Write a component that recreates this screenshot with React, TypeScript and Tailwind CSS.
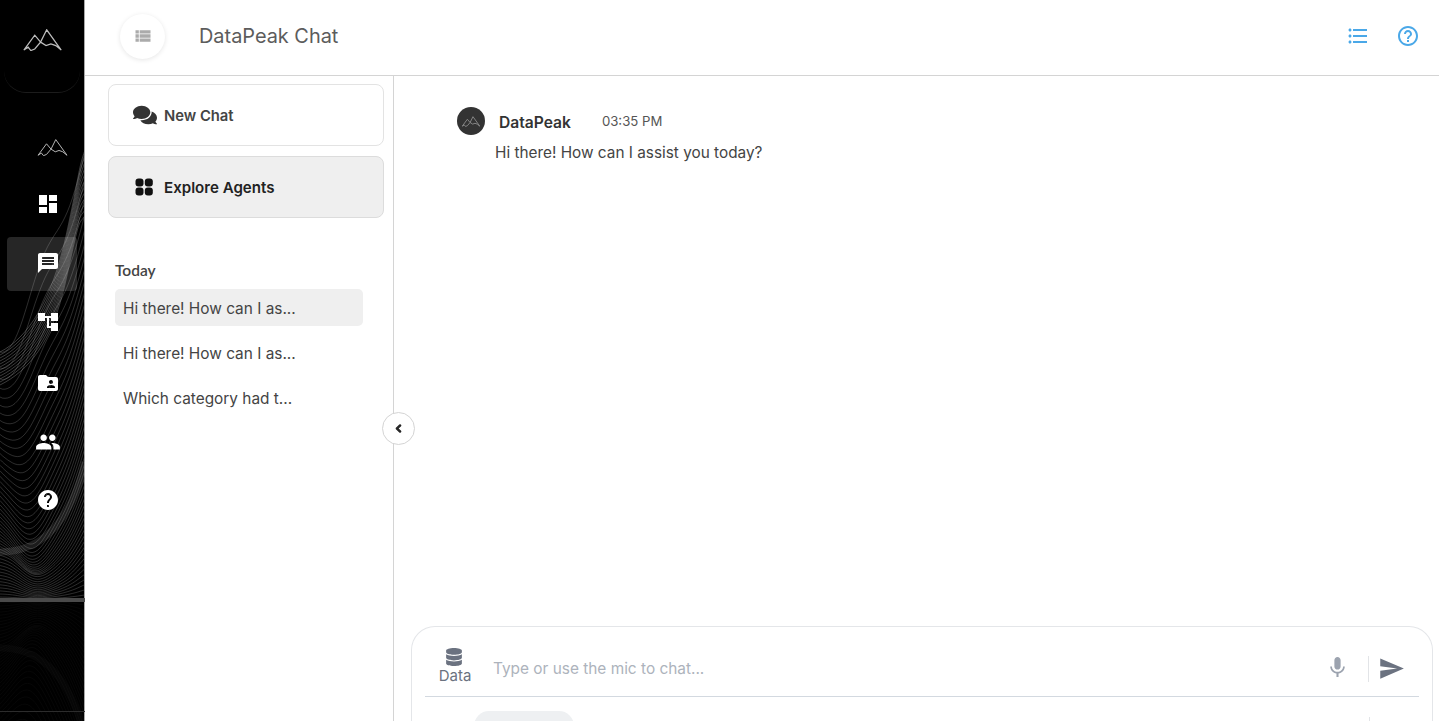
import { FaComments, FaDatabase, FaChevronLeft } from 'react-icons/fa';
import {
  MdDashboard,
  MdMessage,
  MdAccountTree,
  MdFolderShared,
  MdPeople,
  MdHelp,
  MdFormatListBulleted,
  MdHelpOutline,
  MdMic,
  MdSend,
  MdViewList,
} from 'react-icons/md';

const bump = (x: number, cx: number, w: number) => Math.exp(-((x - cx) * (x - cx)) / (2 * w * w));

// upper edge of the contour field, climbs from the left edge to the top right
const ridgeTop = (x: number) => 352 - 200 * Math.pow(x / 85, 1.25) + 10 * Math.sin(x / 9);

function contour(t: number, mirror: boolean) {
  const pts: string[] = [];
  for (let x = 0; x <= 85; x += 2.5) {
    const top = ridgeTop(x);
    const sag = 62 * Math.sin(Math.PI * t) * bump(x, 48, 24);
    const bowl = 26 * Math.sin(Math.PI * Math.min(t * 1.4, 1)) * bump(x, 28, 20);
    const flat = top + (600 - top) * Math.pow(t, 0.72);
    const y = Math.min(flat + sag + bowl - 10 * t * (1 - t) * Math.sin(x / 7), 600);
    pts.push(`${x},${(mirror ? 1200 - y : y).toFixed(1)}`);
  }
  return pts.join(' ');
}

function WaveBackground() {
  const steps = Array.from({ length: 52 }, (_, i) => i / 51);
  const band = Array.from({ length: 12 }, (_, i) => i);
  return (
    <svg className="absolute inset-0" width="85" height="721" viewBox="0 0 85 721" fill="none">
      {steps.map((t, i) => (
        <polyline key={i} points={contour(t, false)} stroke="#9a9a9a" strokeOpacity="0.42" strokeWidth="0.7" />
      ))}
      {steps.map((t, i) => (
        <polyline key={i} points={contour(t, true)} stroke="#9a9a9a" strokeOpacity="0.07" strokeWidth="0.7" />
      ))}
      {/* bright ridge */}
      {band.map((i) => (
        <path
          key={i}
          d={`M0 ${352 + i * 3} C28 ${338 + i * 3} 52 ${300 + i * 4} 66 ${236 + i * 4} S78 ${170 + i * 5} 85 ${150 + i * 6}`}
          stroke="#b5b5b5"
          strokeOpacity="0.42"
          strokeWidth="0.8"
        />
      ))}
      <path d="M85 462C72 516 46 552 0 552" stroke="#fff" strokeOpacity="0.11" strokeWidth="7" />
      <path d="M85 738C72 684 46 648 0 648" stroke="#fff" strokeOpacity="0.025" strokeWidth="7" />
      <path d="M0 600H85" stroke="#4a4a4a" strokeWidth="4" />
      <path d="M0 711.5H85" stroke="#2c2c2c" strokeWidth="1" />
    </svg>
  );
}

function PeakLogo({ className, stroke = '#bdbdbd', width = 1.3 }: { className: string; stroke?: string; width?: number }) {
  return (
    <svg className={className} viewBox="0 0 40 23" fill="none" stroke={stroke} strokeWidth={width}>
      <path d="M0.5 22L11.9 6.5L18 13.7L24.4 0.8L39.6 22L33.9 17.3L28.8 15.5L23.7 17.3L18 13.7L11.9 20.9L7.8 22.5L5 19L0.5 22Z" />
    </svg>
  );
}

function AgentsIcon() {
  return (
    <svg width="18" height="18" viewBox="0 0 18 18" fill="#111">
      <rect x="0.5" y="0.5" width="8" height="8" rx="3" />
      <rect x="9.8" y="0.5" width="8" height="8" rx="3" />
      <rect x="0.5" y="9.5" width="8" height="8" rx="3" />
      <rect x="9.8" y="9.5" width="8" height="8" rx="3" />
    </svg>
  );
}

const history = ['Hi there! How can I as...', 'Hi there! How can I as...', 'Which category had t...'];

export default function App() {
  return (
    <div className="flex h-[721px] w-[1439px] overflow-hidden bg-white font-['Inter',sans-serif] text-[#333]">
      {/* Nav rail */}
      <aside className="relative h-full w-[85px] shrink-0 border-r border-[#a8a8a8] bg-black">
        <WaveBackground />
        <div className="relative flex flex-col items-center">
          <div className="flex h-[93px] w-[76px] justify-center rounded-b-[22px] border-b border-[#1c1c1c] pt-[29px]">
            <PeakLogo className="h-[22px] w-[41px]" />
          </div>
          <div className="mt-[24px] flex w-[70px] flex-col">
            <div className="flex h-[60px] items-center justify-center pl-[20px]">
              <PeakLogo className="h-[17px] w-[31px]" />
            </div>
            <div className="flex h-[60px] items-center justify-center pb-[6px] pl-[12px] text-white">
              <MdDashboard size={24} />
            </div>
            <div className="flex h-[54px] items-center justify-center rounded-[4px] bg-white/15 pb-[2px] pl-[16px] pr-[4px] text-white">
              <MdMessage size={24} />
            </div>
            <div className="flex h-[62px] items-center justify-center pl-[12px] text-white">
              <MdAccountTree size={24} />
            </div>
            <div className="flex h-[59px] items-center justify-center pl-[12px] text-white">
              <MdFolderShared size={24} />
            </div>
            <div className="flex h-[59px] items-center justify-center pl-[12px] text-white">
              <MdPeople size={26} />
            </div>
            <div className="flex h-[58px] items-center justify-center pl-[12px] text-white">
              <MdHelp size={24} />
            </div>
          </div>
        </div>
      </aside>

      <div className="flex h-full min-w-0 flex-1 flex-col">
        {/* Header */}
        <header className="flex h-[76px] shrink-0 items-center border-b border-[#d4d4d4] pb-[3px] pl-[35px] pr-[19px]">
          <button className="flex h-[45px] w-[45px] items-center justify-center rounded-full bg-white text-[#ababab] shadow-[0_1px_5px_rgba(0,0,0,0.1)]">
            <MdViewList size={20} />
          </button>
          <h1 className="ml-[34px] mt-[2px] text-[19.9px] font-normal text-[#5c5c5c]">DataPeak Chat</h1>
          <div className="ml-auto flex items-center gap-[26px] text-[#4aa8e8]">
            <MdFormatListBulleted size={24} />
            <MdHelpOutline size={24} />
          </div>
        </header>

        <div className="flex min-h-0 flex-1">
          {/* Chat list */}
          <section className="relative w-[309px] shrink-0 border-r border-[#d4d4d4] pl-[23px]">
            <button className="mt-[8px] flex h-[62px] w-[276px] items-center gap-[7px] rounded-[8px] border border-[#e3e3e3] bg-white pl-[24px] text-[14.8px] font-semibold text-[#444]">
              <FaComments size={24} className="text-[#333]" />
              <span className="mt-[2px]">New Chat</span>
            </button>
            <button className="mt-[10px] flex h-[62px] w-[276px] items-center gap-[11px] rounded-[8px] border border-[#dcdcdc] bg-[#efefef] pl-[26px] text-[15.1px] font-semibold text-[#222]">
              <AgentsIcon />
              <span className="mt-[2px]">Explore Agents</span>
            </button>
            <h2 className="mt-[41px] pl-[7px] font-['Lato',sans-serif] text-[15.5px] font-semibold leading-[22px] text-[#444]">Today</h2>
            <ul className="ml-[7px] mt-[8px] flex w-[248px] flex-col gap-[8px]">
              {history.map((item, i) => (
                <li
                  key={i}
                  className={`flex h-[37px] items-center rounded-[5px] pl-[8px] pt-[2px] text-[15.4px] text-[#444] ${i === 0 ? 'bg-[#efefef]' : ''}`}
                >
                  {item}
                </li>
              ))}
            </ul>
            <button className="absolute left-[297px] top-[336px] flex h-[33px] w-[33px] items-center justify-center rounded-full border border-[#d4d4d4] bg-white text-[#222]">
              <FaChevronLeft size={9} stroke="currentColor" strokeWidth={60} />
            </button>
          </section>

          {/* Conversation */}
          <main className="flex min-w-0 flex-1 flex-col overflow-hidden">
            <div className="flex-1 pl-[63px] pt-[31px]">
              <div className="flex items-center">
                <span className="flex h-[28px] w-[28px] items-center justify-center rounded-full bg-[#333]">
                  <PeakLogo className="h-[11px] w-[18px]" stroke="#8d8d8d" width={2} />
                </span>
                <span className="ml-[14px] mt-[4px] text-[15.6px] font-semibold text-[#333]">DataPeak</span>
                <span className="ml-[31px] mt-[2px] text-[13.2px] text-[#555]">03:35 PM</span>
              </div>
              <p className="ml-[38px] mt-[8px] text-[15.35px] leading-[20px] text-[#444]">Hi there! How can I assist you today?</p>
            </div>

            {/* Composer */}
            <div className="ml-[17px] mr-[6px] h-[95px] shrink-0 rounded-t-[24px] border border-b-0 border-[#e4e6e9] px-[13px]">
              <div className="flex h-[70px] items-center border-b border-[#d3d9e0] pt-[14px]">
                <div className="flex w-[60px] shrink-0 flex-col items-center text-[#6b7280]">
                  <FaDatabase size={18} className="mr-[2px] mt-[-4px]" />
                  <span className="text-[15px] leading-[20px]">Data</span>
                </div>
                <span className="ml-[8px] text-[15.4px] text-[#adb3bc]">Type or use the mic to chat...</span>
                <div className="ml-auto flex items-center pr-[14px]">
                  <MdMic size={25} className="mb-[3px] text-[#9ca3af]" />
                  <span className="ml-[18px] h-[26px] w-px bg-[#e2e4e7]" />
                  <MdSend size={27} className="ml-[9px] text-[#6b7280]" />
                </div>
              </div>
              <div className="relative flex">
                <span className="ml-[49px] mt-[14px] h-[30px] w-[100px] rounded-full bg-[#eef0f2]" />
                <span className="absolute left-[944px] top-[20px] h-[20px] w-px bg-[#e2e4e7]" />
              </div>
            </div>
          </main>
        </div>
      </div>
    </div>
  );
}
